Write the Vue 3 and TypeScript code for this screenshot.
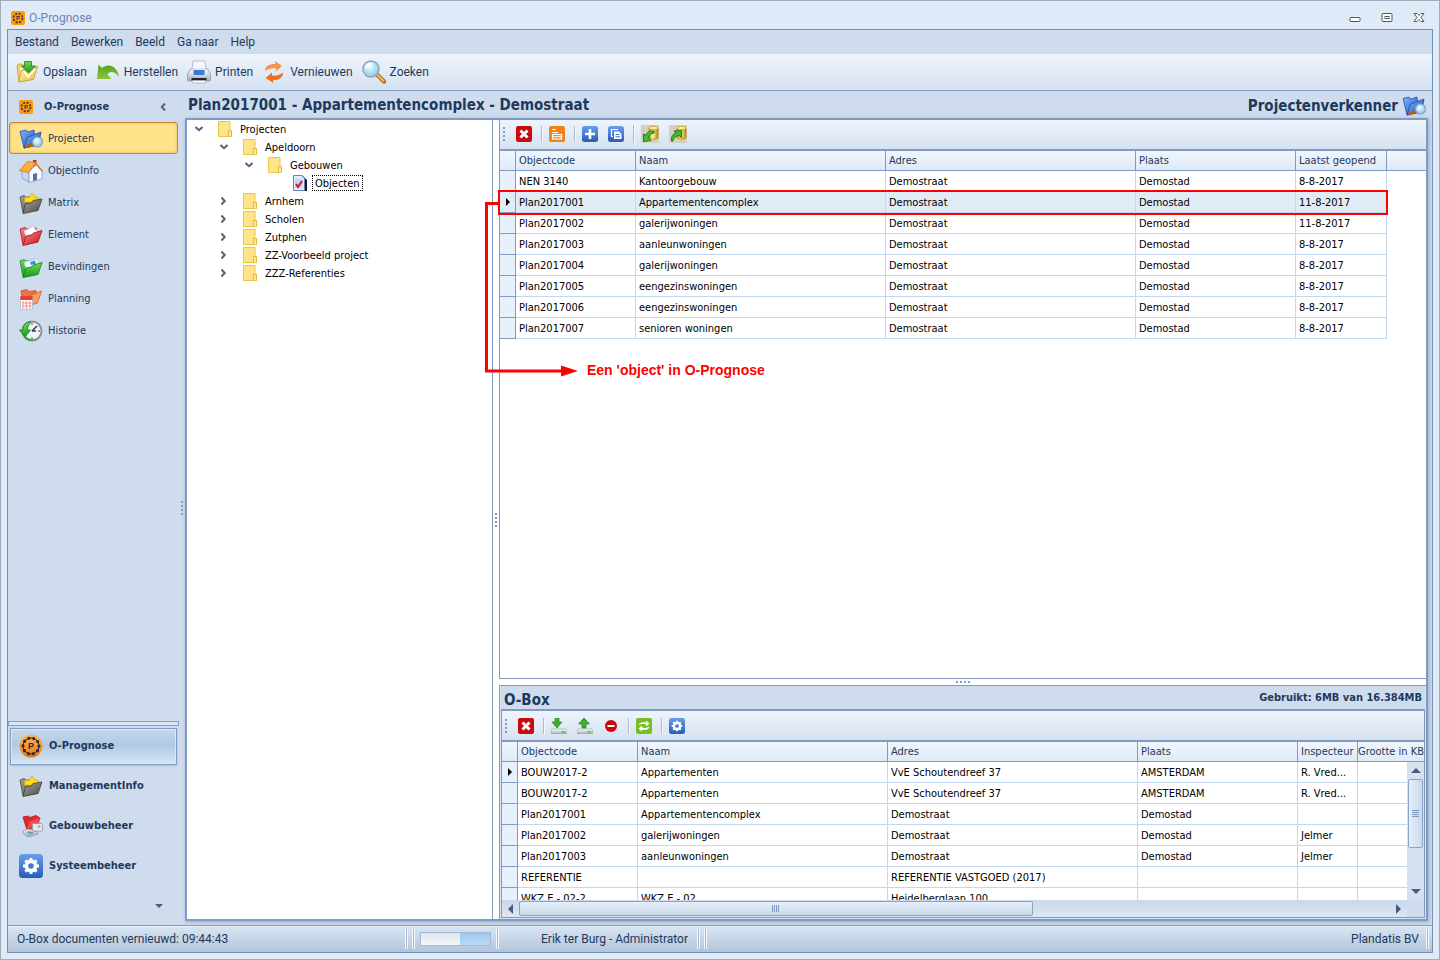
<script setup lang="ts">
import { ref } from 'vue'

interface NavItem { label: string; icon: string }
interface TreeNode { label: string; level: number; open?: boolean; leaf?: boolean }

const menu: string[] = ['Bestand', 'Bewerken', 'Beeld', 'Ga naar', 'Help']

const tools: NavItem[] = [
  { label: 'Opslaan', icon: 'save' },
  { label: 'Herstellen', icon: 'undo' },
  { label: 'Printen', icon: 'printer' },
  { label: 'Vernieuwen', icon: 'refresh' },
  { label: 'Zoeken', icon: 'search' },
]

const pages: NavItem[] = [
  { label: 'Projecten', icon: 'projects' },
  { label: 'ObjectInfo', icon: 'house' },
  { label: 'Matrix', icon: 'matrix' },
  { label: 'Element', icon: 'element' },
  { label: 'Bevindingen', icon: 'findings' },
  { label: 'Planning', icon: 'planning' },
  { label: 'Historie', icon: 'history' },
]
const activePage = ref('Projecten')

const modules: NavItem[] = [
  { label: 'O-Prognose', icon: 'round' },
  { label: 'ManagementInfo', icon: 'matrix' },
  { label: 'Gebouwbeheer', icon: 'building' },
  { label: 'Systeembeheer', icon: 'gear' },
]
const activeModule = ref('O-Prognose')

const tree: TreeNode[] = [
  { label: 'Projecten', level: 0, open: true },
  { label: 'Apeldoorn', level: 1, open: true },
  { label: 'Gebouwen', level: 2, open: true },
  { label: 'Objecten', level: 3, leaf: true },
  { label: 'Arnhem', level: 1 },
  { label: 'Scholen', level: 1 },
  { label: 'Zutphen', level: 1 },
  { label: 'ZZ-Voorbeeld project', level: 1 },
  { label: 'ZZZ-Referenties', level: 1 },
]

const objectTools: string[][] = [['delete'], ['form'], ['plus', 'copy'], ['dbin', 'dbout']]
const boxTools: string[][] = [['delete'], ['download', 'upload', 'stop'], ['sync'], ['gear']]
const toolNames: Record<string, string> = {
  delete: 'Sluiten', form: 'Formulier', plus: 'Toevoegen', copy: 'Kopiëren', dbin: 'Importeren',
  dbout: 'Exporteren', download: 'Downloaden', upload: 'Uploaden', stop: 'Verwijderen',
  sync: 'Synchroniseren', gear: 'Instellingen',
}

const objectColumns: string[] = ['Objectcode', 'Naam', 'Adres', 'Plaats', 'Laatst geopend']
const objects: string[][] = [
  ['NEN 3140', 'Kantoorgebouw', 'Demostraat', 'Demostad', '8-8-2017'],
  ['Plan2017001', 'Appartementencomplex', 'Demostraat', 'Demostad', '11-8-2017'],
  ['Plan2017002', 'galerijwoningen', 'Demostraat', 'Demostad', '11-8-2017'],
  ['Plan2017003', 'aanleunwoningen', 'Demostraat', 'Demostad', '8-8-2017'],
  ['Plan2017004', 'galerijwoningen', 'Demostraat', 'Demostad', '8-8-2017'],
  ['Plan2017005', 'eengezinswoningen', 'Demostraat', 'Demostad', '8-8-2017'],
  ['Plan2017006', 'eengezinswoningen', 'Demostraat', 'Demostad', '8-8-2017'],
  ['Plan2017007', 'senioren woningen', 'Demostraat', 'Demostad', '8-8-2017'],
]
const selectedObject = ref(1)

const boxColumns: string[] = ['Objectcode', 'Naam', 'Adres', 'Plaats', 'Inspecteur', 'Grootte in KB']
const boxRows: string[][] = [
  ['BOUW2017-2', 'Appartementen', 'VvE Schoutendreef 37', 'AMSTERDAM', 'R. Vred...', ''],
  ['BOUW2017-2', 'Appartementen', 'VvE Schoutendreef 37', 'AMSTERDAM', 'R. Vred...', ''],
  ['Plan2017001', 'Appartementencomplex', 'Demostraat', 'Demostad', '', ''],
  ['Plan2017002', 'galerijwoningen', 'Demostraat', 'Demostad', 'Jelmer', ''],
  ['Plan2017003', 'aanleunwoningen', 'Demostraat', 'Demostad', 'Jelmer', ''],
  ['REFERENTIE', '', 'REFERENTIE VASTGOED (2017)', '', '', ''],
  ['WKZ E - 02-2', 'WKZ E - 02', 'Heidelberglaan 100', '', '', ''],
]
const selectedBox = ref(0)
</script>

<template>
  <div class="window">
    <svg class="sprite" aria-hidden="true">
      <defs>
        <linearGradient id="gBlue" x1="0" y1="0" x2="0" y2="1"><stop offset="0" stop-color="#6a9ded" /><stop offset="1" stop-color="#2a5bb8" /></linearGradient>
        <linearGradient id="gFold" x1="0" y1="0" x2="1" y2="1"><stop offset="0" stop-color="#7fb2f6" /><stop offset="1" stop-color="#1d55c0" /></linearGradient>
        <linearGradient id="gYel" x1="0" y1="0" x2="1" y2="1"><stop offset="0" stop-color="#fff6bd" /><stop offset="1" stop-color="#efb93a" /></linearGradient>
        <linearGradient id="gGrey" x1="0" y1="0" x2="1" y2="1"><stop offset="0" stop-color="#a2a29c" /><stop offset="1" stop-color="#4c4a44" /></linearGradient>
        <linearGradient id="gRed" x1="0" y1="0" x2="1" y2="1"><stop offset="0" stop-color="#f98585" /><stop offset="1" stop-color="#c4141c" /></linearGradient>
        <linearGradient id="gGreen" x1="0" y1="0" x2="0" y2="1"><stop offset="0" stop-color="#6fdc4e" /><stop offset="1" stop-color="#159a22" /></linearGradient>
        <linearGradient id="gUndo" x1="0" y1="0" x2="0" y2="1"><stop offset="0" stop-color="#57a01d" /><stop offset="1" stop-color="#8cc63a" /></linearGradient>
        <linearGradient id="gOr" x1="0" y1="0" x2="0" y2="1"><stop offset="0" stop-color="#ffb65a" /><stop offset="1" stop-color="#ea780f" /></linearGradient>
        <linearGradient id="gSil" x1="0" y1="0" x2="0" y2="1"><stop offset="0" stop-color="#ffffff" /><stop offset="1" stop-color="#a3a8b2" /></linearGradient>
        <linearGradient id="gCyl" x1="0" y1="0" x2="1" y2="0"><stop offset="0" stop-color="#d8920c" /><stop offset=".4" stop-color="#fff29a" /><stop offset="1" stop-color="#c88606" /></linearGradient>
        <radialGradient id="gLens" cx=".4" cy=".35" r=".7"><stop offset="0" stop-color="#f4fdff" /><stop offset="1" stop-color="#7cc4ee" /></radialGradient>
      </defs>

      <symbol id="logo" viewBox="0 0 16 16">
        <rect x="1" y="1" width="14" height="14" rx="2" fill="#ff9a0a" />
        <circle cx="8" cy="8" r="4.5" fill="none" stroke="#4a4034" stroke-width="1.8" stroke-dasharray="2.2 1.334" />
      </symbol>
      <symbol id="round" viewBox="0 0 24 24">
        <circle cx="12" cy="12" r="11.5" fill="url(#gOr)" />
        <circle cx="12" cy="12" r="8" fill="none" stroke="#2b2b3a" stroke-width="1" />
        <circle cx="12" cy="12" r="8" fill="none" stroke="#2b2b3a" stroke-width="3.2" stroke-linecap="round" stroke-dasharray="0 5.03" />
      </symbol>
      <symbol id="save" viewBox="0 0 24 24">
        <path d="M2 6 L3.500 4 H7.500 L9 5.500 H17 V19 L4 22 Z" fill="#f3d068" stroke="#c79a2c" stroke-width=".8" />
        <path d="M5 8 L19 6 V15 L6 18Z" fill="#fffbe6" />
        <path d="M3.500 22 L6.500 10 L22.500 6.500 L18.500 19.500 Z" fill="url(#gYel)" stroke="#cda032" stroke-width=".9" />
        <path d="M9.500 12 L13 17 L20 9" fill="none" stroke="#fff" stroke-width="1.500" />
        <path d="M9.500 1.500 H16.500 V6 H20.500 L13.500 13 L6.500 6 H9.500Z" fill="url(#gGreen)" stroke="#187d1c" stroke-width=".8" />
      </symbol>
      <symbol id="undo" viewBox="0 0 24 24">
        <path d="M2.500 4.500 L1 19 L15.500 19 L11.500 14.500 C14 10.500 19 11.500 23 17 C22 7 12.500 2 6 8 Z" fill="url(#gUndo)" />
      </symbol>
      <symbol id="printer" viewBox="0 0 24 24">
        <path d="M6 1 H18 L19.500 13 H4.500Z" fill="#f6f8fc" stroke="#aab1c0" stroke-width=".8" />
        <path d="M3.500 9 H20.500 L23.500 14 V20 Q23.500 21 22.500 21 H1.500 Q.500 21 .500 20 V14Z" fill="url(#gSil)" stroke="#8d94a4" stroke-width=".8" />
        <path d="M6 8 H18 L18.500 15 H5.500Z" fill="#dfe8f8" />
        <rect x="6.500" y="10" width="11" height="5" fill="#3e78d2" />
        <path d="M4.500 18 H19.500 V20.500 H4.500Z" fill="#20242c" />
        <path d="M5 20.500 H19 L18 23 H6Z" fill="#fff" stroke="#9fa5b2" stroke-width=".7" />
      </symbol>
      <symbol id="refresh" viewBox="0 0 24 24">
        <path d="M3 11 C3 5.500 8 3.500 13.500 4 L13 1 L20 6 L14 11.500 L14 8.500 C9 8 6 9 3 11Z" fill="#f5934a" />
        <path d="M21 12.500 C21 18.500 16 20.500 11 20 L11.500 23 L3.500 18 L10 12.500 V15.500 C15 16 18 15 21 12.500Z" fill="#f26f21" />
      </symbol>
      <symbol id="search" viewBox="0 0 24 24">
        <path d="M15.500 15 L22 21.500" stroke="#a8651b" stroke-width="4.200" stroke-linecap="round" />
        <path d="M15.500 15 L21.500 21" stroke="#f4b54e" stroke-width="2.400" stroke-linecap="round" />
        <circle cx="9" cy="9" r="8" fill="url(#gLens)" stroke="#8ea3b8" stroke-width="1.400" />
        <path d="M4 8 C4.500 5 7 3.500 10 4" fill="none" stroke="#fff" stroke-width="1.600" />
      </symbol>

      <symbol id="projects" viewBox="0 0 24 24">
        <path d="M1 4.500 L7 3 L9 5 L15 3 L17 18 L5 21Z" fill="url(#gFold)" stroke="#2550ad" stroke-width=".8" />
        <path d="M5 21 L8.500 10 L13 8.500 L22 5 L19.500 18Z" fill="url(#gFold)" stroke="#2048a0" stroke-width=".8" />
        <path d="M8 19.500 L14 17.500" stroke="#b95c16" stroke-width="3.200" stroke-linecap="round" />
        <circle cx="18.500" cy="15" r="5" fill="url(#gLens)" stroke="#7ea4c6" stroke-width="1.200" />
      </symbol>
      <symbol id="house" viewBox="0 0 24 24">
        <rect x="14" y="1" width="3.500" height="7" fill="#c8331f" />
        <path d="M3 11 L10 14 V23 L3 19Z" fill="#c9d8f0" stroke="#7f9cce" stroke-width=".8" />
        <path d="M10 13 L17 5.500 L23 12 V20 L10 23.500Z" fill="#f7faff" stroke="#7f9cce" stroke-width=".8" />
        <path d="M.500 11.500 L8.500 2.500 L17 3.500 L9.500 13.500Z" fill="#ffad42" stroke="#d9731c" stroke-width=".8" />
        <path d="M16.500 4 L23.500 12.500" stroke="#e98124" stroke-width="1.600" />
        <path d="M14 15 L18 14 V21 L14 22Z" fill="#5a6fa8" />
      </symbol>
      <symbol id="matrix" viewBox="0 0 24 24">
        <path d="M1 6 L5 4.500 L7 6 L16 6 L18 19 L4 22Z" fill="url(#gGrey)" stroke="#4d4b45" stroke-width=".8" />
        <path d="M5 11 L6 6 L10 6.500 L13 2 L15.500 5.500 L20 7 L17 12Z" fill="#ffdc16" stroke="#d7a208" stroke-width=".7" />
        <path d="M4 22.500 L6.500 12.500 L12 12 L14 9.500 L23 8 L19 19.500Z" fill="url(#gGrey)" stroke="#403e39" stroke-width=".8" />
      </symbol>
      <symbol id="element" viewBox="0 0 24 24">
        <path d="M1 6 L6 4.500 L8 6 L17 5 L18 19 L4 22Z" fill="url(#gRed)" stroke="#b01820" stroke-width=".8" />
        <path d="M5 8 L14 3.500 L19 9 L7 14Z" fill="#fff" stroke="#c9c9d2" stroke-width=".7" />
        <path d="M4 22.500 L7 13 L12.500 12 L14.500 10 L23 7.500 L19 19Z" fill="url(#gRed)" stroke="#a8121a" stroke-width=".8" />
      </symbol>
      <symbol id="findings" viewBox="0 0 24 24">
        <path d="M1 6 L5 4.500 L7 6 L17 5 L18 19 L4 22Z" fill="url(#gGreen)" stroke="#168a1e" stroke-width=".8" />
        <path d="M5 7 L18 3.500 L20 9 L7 14Z" fill="#eef8ff" stroke="#9cc6dc" stroke-width=".7" />
        <path d="M11 7 L16 5.500 L17 9 L12 10Z" fill="#3f8fd8" />
        <path d="M4 22.500 L7 13 L12.500 12 L14.500 10 L23 7.500 L19 19.500Z" fill="url(#gGreen)" stroke="#128019" stroke-width=".8" />
      </symbol>
      <symbol id="planning" viewBox="0 0 24 24">
        <path d="M2 4 L8 2.500 L10 4.500 L17 3.500 V16 L5 19Z" fill="#f0743a" stroke="#c24d18" stroke-width=".8" />
        <path d="M8 19 L11 8.500 L15 7 L22.500 4 L18.500 16Z" fill="#fb9a5c" stroke="#cf5e22" stroke-width=".8" />
        <rect x="1.500" y="10" width="12" height="12" fill="#fff" stroke="#b9b3b9" stroke-width=".8" />
        <rect x="1.500" y="9" width="12" height="4" fill="#e0402f" />
        <path d="M4 14 V21 M7.500 14 V21 M11 14 V21 M3 16 H12.500 M3 19 H12.500" stroke="#ef8f85" stroke-width="1" />
      </symbol>
      <symbol id="history" viewBox="0 0 24 24">
        <circle cx="13" cy="12" r="10.500" fill="#8a929c" />
        <circle cx="13" cy="12" r="8.500" fill="#eef6fb" />
        <path d="M13 12 L18 7 M13 12 H17" stroke="#24456e" stroke-width="1.600" />
        <path d="M13 4 V6 M13 18 V20 M19 12 H21" stroke="#e2483c" stroke-width="1.300" />
        <path d="M12 3 C6 3 3.500 7 3.500 11 H.500 L6 18 L11.500 11 H8.500 C8.500 8 9.500 6 12 3Z" fill="url(#gGreen)" stroke="#0f7d19" stroke-width=".8" />
        <path d="M7 17 C9 20 13 21 17 20 C14 23 8 22.500 5 18Z" fill="#2da833" />
      </symbol>
      <symbol id="building" viewBox="0 0 24 24">
        <path d="M4 3 L9 2 L11 3.500 L17 1.500 L21 4 L18 13 L8 16Z" fill="#e12a2f" stroke="#ad151c" stroke-width=".8" />
        <path d="M8 15 L10.500 7.500 L21 3.500 L18 12Z" fill="#f14b4b" />
        <path d="M4 17 L9 15 L19 18.500 V20 L11 22.500 H8 L4 19Z" fill="url(#gSil)" stroke="#8f969f" stroke-width=".8" />
        <path d="M7 18 L10 17 L16 19 L11 20.500Z" fill="#5aa6dd" />
        <rect x="13.500" y="9.500" width="10" height="7.500" rx="1" fill="#e6eaee" stroke="#8f969f" stroke-width=".8" />
        <circle cx="20" cy="12.500" r="1.600" fill="#aeb5bc" />
      </symbol>
      <symbol id="gear" viewBox="0 0 24 24">
        <rect width="24" height="24" rx="3.500" fill="url(#gBlue)" />
        <circle cx="12" cy="12" r="4.600" fill="none" stroke="#fff" stroke-width="3.600" />
        <path d="M12 4V20M4 12H20M6.400 6.400L17.600 17.600M17.600 6.400L6.400 17.600" stroke="#fff" stroke-width="3" />
        <circle cx="12" cy="12" r="2.800" fill="#447ad2" />
      </symbol>

      <symbol id="delete" viewBox="0 0 16 16">
        <rect width="16" height="16" rx="2" fill="#c90a0e" />
        <path d="M4.500 4.500 L11.500 11.500 M11.500 4.500 L4.500 11.500" stroke="#fff" stroke-width="3" />
      </symbol>
      <symbol id="form" viewBox="0 0 16 16">
        <rect width="16" height="16" rx="2" fill="#f08316" />
        <path d="M3 3.500 H7 M3 6.500 H9" stroke="#fff" stroke-width="1.200" />
        <rect x="3.500" y="8.500" width="9" height="4.500" fill="none" stroke="#fff" stroke-width="1.200" />
        <path d="M3 10.700 H13" stroke="#fff" stroke-width="1" />
      </symbol>
      <symbol id="plus" viewBox="0 0 16 16">
        <rect width="16" height="16" rx="2.500" fill="url(#gBlue)" />
        <path d="M8 3 V13 M3 8 H13" stroke="#fff" stroke-width="2.600" />
      </symbol>
      <symbol id="copy" viewBox="0 0 16 16">
        <rect width="16" height="16" rx="2.500" fill="url(#gBlue)" />
        <path d="M10 3.500 H3.500 V10.500 H5" fill="none" stroke="#fff" stroke-width="1.200" />
        <path d="M6 5.500 H11 L13.500 8 V13 H6Z" fill="#fff" />
        <path d="M7.500 8.500 H11.500 M7.500 10.800 H12" stroke="#3d70c8" stroke-width="1" />
      </symbol>
      <symbol id="dbin" viewBox="0 0 18 18">
        <rect width="18" height="18" fill="#d2cfc5" />
        <path d="M8 3 V13 Q12.500 16 17 13 V3Z" fill="url(#gCyl)" stroke="#b78308" stroke-width=".7" />
        <ellipse cx="12.500" cy="3" rx="4.500" ry="1.800" fill="#ffeb8a" stroke="#c2940e" stroke-width=".7" />
        <path d="M13 6 C8.500 5.500 5.500 7.500 5 10.500 L2.500 9 V16.500 L10 15.500 L7.500 13 C8 10 10 8.500 13 8Z" fill="#46bd2b" stroke="#17701a" stroke-width=".9" />
      </symbol>
      <symbol id="dbout" viewBox="0 0 18 18">
        <rect width="18" height="18" fill="#d2cfc5" />
        <path d="M8 3 V13 Q12.500 16 17 13 V3Z" fill="url(#gCyl)" stroke="#b78308" stroke-width=".7" />
        <ellipse cx="12.500" cy="3" rx="4.500" ry="1.800" fill="#ffeb8a" stroke="#c2940e" stroke-width=".7" />
        <path d="M2.500 16 C2 11.500 4 9 7 8 L5 6 L12.500 5.500 V13 L10 10.500 C7 11 4.500 12.500 4 16Z" fill="#46bd2b" stroke="#17701a" stroke-width=".9" />
      </symbol>
      <symbol id="download" viewBox="0 0 16 16">
        <path d="M1 11 H15 L16 13 V16 H0 V13Z" fill="url(#gSil)" stroke="#9a9f98" stroke-width=".6" />
        <rect x="10.500" y="13.200" width="3.500" height="1.300" fill="#46bd2b" />
        <path d="M4 0 H8 V4 H11 L6 10 L1 4 H4Z" fill="#3fae30" stroke="#2a8420" stroke-width=".7" />
      </symbol>
      <symbol id="upload" viewBox="0 0 16 16">
        <path d="M1 11 H15 L16 13 V16 H0 V13Z" fill="url(#gSil)" stroke="#9a9f98" stroke-width=".6" />
        <rect x="10.500" y="13.200" width="3.500" height="1.300" fill="#46bd2b" />
        <path d="M5 10 H9 V6 H12.500 L7 0 L1.500 6 H5Z" fill="#3fae30" stroke="#2a8420" stroke-width=".7" />
      </symbol>
      <symbol id="stop" viewBox="0 0 16 16">
        <circle cx="8" cy="8" r="6" fill="#cf0408" />
        <rect x="4.500" y="7" width="7" height="2" fill="#fff" />
      </symbol>
      <symbol id="sync" viewBox="0 0 16 16">
        <rect width="16" height="16" rx="2" fill="#78bd25" />
        <path d="M2.500 7.500 C3 4.500 6.500 3.500 10 4.500 V2.500 L13.500 5.500 L10 8.500 V6.500 C7 5.800 4.500 6 2.500 7.500Z" fill="#fff" />
        <path d="M13.500 8.500 C13 11.500 9.500 12.500 6 11.500 V13.500 L2.500 10.500 L6 7.500 V9.500 C9 10.200 11.500 10 13.500 8.500Z" fill="#fff" />
      </symbol>
      <symbol id="folder" viewBox="0 0 14 16">
        <path d="M.500 .500 H12 V9.500 H13.500 V15.500 H.500Z" fill="#ffe38a" stroke="#ecc648" />
        <path d="M10.500 15 V9.500 H13.500 V15.500" fill="#ffe999" stroke="#e0b83a" />
      </symbol>
      <symbol id="doc" viewBox="0 0 14 16">
        <path d="M9 0 L14 5 V16 H10 V2Z" fill="#14142a" />
        <path d="M.500 .500 H9 L11.500 3.500 V15.500 H.500Z" fill="#dcecfc" stroke="#6884ac" />
        <rect x="2" y="4" width="8" height="9" fill="#b9d9f6" />
        <path d="M3 9 L5 12 L9 6" fill="none" stroke="#e3101c" stroke-width="2" />
      </symbol>
      <symbol id="chev" viewBox="0 0 8 8">
        <path d="M.500 2 L4 5.200 L7.500 2" fill="none" stroke="#56627f" stroke-width="2" />
      </symbol>
    </svg>

    <header class="titlebar">
      <svg class="i16" viewBox="0 0 16 16"><use href="#logo" /><text class="letter" x="8" y="10">P</text></svg>
      <span class="app-name">O-Prognose</span>
      <div class="win-buttons">
        <button aria-label="Minimaliseren"><svg width="12" height="12" viewBox="0 0 12 12"><rect x="1" y="5.500" width="10" height="4" rx="1" fill="#fff" stroke="#4d5664" /></svg></button>
        <button aria-label="Maximaliseren"><svg width="12" height="12" viewBox="0 0 12 12"><rect x="1" y="1.500" width="10" height="8" rx="1" fill="#fff" stroke="#4d5664" /><rect x="4" y="4.500" width="4" height="2" fill="#fff" stroke="#4d5664" /></svg></button>
        <button aria-label="Sluiten"><svg width="12" height="12" viewBox="0 0 12 12"><path d="M1 1.500 H4 L6 3.500 L8 1.500 H11 L8 5.500 L11 9.500 H8 L6 7.500 L4 9.500 H1 L4 5.500Z" fill="#fff" stroke="#4d5664" /></svg></button>
      </div>
    </header>

    <div class="frame">
      <nav class="menubar">
        <button v-for="m in menu" :key="m">{{ m }}</button>
      </nav>
      <div class="toolbar">
        <button v-for="t in tools" :key="t.label">
          <svg class="i24"><use :href="'#' + t.icon" /></svg>{{ t.label }}
        </button>
      </div>

      <div class="main">
        <aside class="nav">
          <div class="nav-head">
            <svg class="i16" viewBox="0 0 16 16"><use href="#logo" /><text class="letter" x="8" y="10">P</text></svg>
            <strong>O-Prognose</strong>
            <button class="fold" aria-label="Inklappen"><svg class="chev left"><use href="#chev" /></svg></button>
          </div>
          <button
            v-for="p in pages" :key="p.label" class="page" :class="{ active: p.label === activePage }"
            @click="activePage = p.label"
          >
            <svg class="i24"><use :href="'#' + p.icon" /></svg>{{ p.label }}
          </button>
          <div class="nav-split"></div>
          <div class="modules">
            <button
              v-for="m in modules" :key="m.label" class="module" :class="{ active: m.label === activeModule }"
              @click="activeModule = m.label"
            >
              <svg class="i24" viewBox="0 0 24 24">
                <use :href="'#' + m.icon" />
                <text v-if="m.icon === 'round'" class="letter big" x="12" y="15">P</text>
              </svg>{{ m.label }}
            </button>
          </div>
          <button class="more" aria-label="Meer"><i class="tri down small"></i></button>
        </aside>
        <div class="vsplit"><i v-for="n in 4" :key="n"></i></div>

        <section class="content">
          <div class="heading">
            <h1>Plan2017001 - Appartementencomplex - Demostraat</h1>
            <h2>Projectenverkenner<svg class="i24"><use href="#projects" /></svg></h2>
          </div>
          <div class="workspace">
            <ul class="tree">
              <li v-for="n in tree" :key="n.label" :style="{ paddingLeft: n.level * 25 + 6 + 'px' }">
                <button v-if="!n.leaf" class="toggle" :aria-label="n.label"><svg class="chev" :class="{ right: !n.open }"><use href="#chev" /></svg></button>
                <span v-else class="toggle"></span>
                <svg class="node"><use :href="n.leaf ? '#doc' : '#folder'" /></svg>
                <span class="label" :class="{ focused: n.leaf }">{{ n.label }}</span>
              </li>
            </ul>
            <div class="vsplit white"><i v-for="n in 4" :key="n"></i></div>

            <div class="right">
              <div class="objects">
                <div class="strip">
                  <span class="grip"></span>
                  <div v-for="(g, gi) in objectTools" :key="gi" class="group">
                    <button v-for="t in g" :key="t" :aria-label="toolNames[t]"><svg :class="t.startsWith('db') ? 'i18' : 'i16'"><use :href="'#' + t" /></svg></button>
                  </div>
                </div>
                <table class="grid">
                  <colgroup><col class="c-ind" /><col class="c-code" /><col class="c-wide" /><col class="c-wide" /><col class="c-city" /><col class="c-date" /><col /></colgroup>
                  <thead><tr><th></th><th v-for="c in objectColumns" :key="c">{{ c }}</th><th></th></tr></thead>
                  <tbody>
                    <tr v-for="(r, ri) in objects" :key="ri" :class="{ sel: ri === selectedObject }" @click="selectedObject = ri">
                      <td class="ind"><i v-if="ri === selectedObject" class="tri mark"></i></td>
                      <td v-for="(c, ci) in r" :key="ci">{{ c }}</td>
                      <td class="void"></td>
                    </tr>
                  </tbody>
                </table>
                <div class="callout">
                  <div class="ring"></div>
                  <svg width="96" height="180" viewBox="0 0 96 180">
                    <path d="M15 3.500 H2.500 V171 H80" fill="none" stroke="#f00" stroke-width="3" />
                    <path d="M77 165.500 L94 171 L77 176.500Z" fill="#f00" />
                  </svg>
                  <p>Een 'object' in O-Prognose</p>
                </div>
              </div>
              <div class="hsplit"><i v-for="n in 4" :key="n"></i></div>
              <div class="box">
                <div class="box-head"><h2>O-Box</h2><strong>Gebruikt: 6MB van 16.384MB</strong></div>
                <div class="box-body">
                  <div class="strip">
                    <span class="grip"></span>
                    <div v-for="(g, gi) in boxTools" :key="gi" class="group">
                      <button v-for="t in g" :key="t" :aria-label="toolNames[t]"><svg class="i16"><use :href="'#' + t" /></svg></button>
                    </div>
                  </div>
                  <div class="clip">
                    <table class="grid">
                      <colgroup><col class="c-ind" /><col class="c-code" /><col class="c-wide" /><col class="c-wide" /><col class="c-city" /><col class="c-insp" /><col /></colgroup>
                      <thead><tr><th></th><th v-for="c in boxColumns" :key="c">{{ c }}</th></tr></thead>
                      <tbody>
                        <tr v-for="(r, ri) in boxRows" :key="ri" @click="selectedBox = ri">
                          <td class="ind"><i v-if="ri === selectedBox" class="tri mark"></i></td>
                          <td v-for="(c, ci) in r" :key="ci">{{ c }}</td>
                        </tr>
                      </tbody>
                    </table>
                    <div class="vscroll">
                      <button aria-label="Omhoog"><i class="tri up"></i></button>
                      <div class="thumb"></div>
                      <button class="last" aria-label="Omlaag"><i class="tri down"></i></button>
                    </div>
                  </div>
                  <div class="hscroll">
                    <button aria-label="Links"><i class="tri leftward"></i></button>
                    <div class="track"><div class="thumb"></div></div>
                    <button aria-label="Rechts"><i class="tri rightward"></i></button>
                    <span class="corner"></span>
                  </div>
                </div>
              </div>
            </div>
          </div>
        </section>
      </div>

      <footer class="status">
        <span class="msg">O-Box documenten vernieuwd: 09:44:43</span>
        <i class="sep"></i><i class="sep"></i>
        <div class="progress" role="progressbar" aria-label="Voortgang"><div></div></div>
        <i class="sep"></i>
        <span class="user">Erik ter Burg - Administrator</span>
        <i class="sep"></i><i class="sep"></i>
        <span class="company">Plandatis BV</span>
        <i class="sep"></i>
      </footer>
    </div>
  </div>
</template>

<style>
html, body { margin: 0; }
</style>

<style scoped>
* { box-sizing: border-box; }
button { border: 0; background: none; padding: 0; margin: 0; font: inherit; color: inherit; cursor: default; text-align: left; }
h1, h2, p, ul { margin: 0; padding: 0; }
svg { display: block; flex: none; }
.sprite { position: absolute; width: 0; height: 0; }
.i16 { width: 16px; height: 16px; }
.i18 { width: 18px; height: 18px; }
.i24 { width: 24px; height: 24px; }
.letter { font: 700 6px "Liberation Sans", Arial, sans-serif; text-anchor: middle; fill: #2b2b3a; }
.letter.big { font-size: 9px; }

.window {
  display: flex; flex-direction: column; height: 100vh; padding: 0 6px 6px; overflow: hidden;
  border: 1px solid #9dacbc; background: #dfeaf6; color: #1e395b;
  font: 11px/14px "DejaVu Sans Condensed", Tahoma, sans-serif;
}
.titlebar { display: flex; align-items: center; gap: 3px; height: 28px; flex: none; padding: 5px 8px 0 3px; }
.app-name { color: #6d83b4; font: 12px/16px Roboto, "Segoe UI", sans-serif; }
.win-buttons { display: flex; gap: 20px; margin-left: auto; }

.frame { flex: 1; min-height: 0; display: flex; flex-direction: column; border: 1px solid #7390b4; background: #cfdcee; }
.menubar { display: flex; gap: 12px; height: 24px; flex: none; padding: 0 7px; font: 12px/24px Roboto, "Segoe UI", sans-serif; }
.toolbar {
  display: flex; align-items: center; gap: 9px; height: 37px; flex: none; padding: 0 7px; border-bottom: 1px solid #859ebf;
  background: linear-gradient(#edf4fd, #d6e2f0); font: 12px/16px Roboto, "Segoe UI", sans-serif;
}
.toolbar button { display: flex; align-items: center; gap: 4px; }

.main { flex: 1; min-height: 0; display: flex; }
.nav { width: 171px; flex: none; display: flex; flex-direction: column; }
.nav-head { display: flex; align-items: center; gap: 10px; height: 31px; flex: none; padding: 0 12px 0 10px; }
.nav-head strong { flex: 1; }
.chev { width: 8px; height: 8px; }
.chev.left { transform: rotate(90deg); }
.chev.right { transform: rotate(-90deg); }
.page { display: flex; align-items: center; gap: 5px; height: 32px; margin: 0 1px; padding: 2px 0 0 9px; border: 1px solid transparent; border-radius: 3px; }
.page.active { border-color: #c08a3c; background: #ffe28a; box-shadow: inset 0 0 3px #e5a94a; }
.nav-split { height: 5px; margin-top: auto; border: 1px solid #86a0c4; background: #d9e7f6; }
.modules { display: flex; flex-direction: column; gap: 3px; padding: 2px; }
.module { display: flex; align-items: center; gap: 6px; height: 37px; padding: 0 0 1px 8px; border: 1px solid transparent; font-weight: 700; }
.module.active { border-color: #7f9cc4; background: linear-gradient(#c6d8ec, #b1c9e3 45%, #d3e4f4); box-shadow: inset 0 0 0 1px #dbe8f6, 0 1px 2px #a9bdd6; }
.more { align-self: flex-end; height: 38px; width: 40px; display: flex; align-items: center; justify-content: center; }

.vsplit { width: 6px; flex: none; display: flex; flex-direction: column; justify-content: center; gap: 2px; padding-left: 2px; }
.vsplit i, .hsplit i { width: 2px; height: 2px; background: #8a9dbb; }
.white { background: #fff; }

.content { flex: 1; min-width: 0; display: flex; flex-direction: column; padding: 0 4px 4px 0; }
.heading { display: flex; align-items: center; justify-content: space-between; height: 27px; flex: none; padding: 0 2px 0 3px; }
h1, h2 { font-size: 15px; line-height: 20px; font-weight: 700; }
.heading h2 { display: flex; align-items: center; gap: 4px; padding-top: 2px; }
.workspace { flex: 1; min-height: 0; display: flex; border: 2px solid #819bbf; box-shadow: 1px 1px 4px #94a9c7; background: #fff; }
.tree { width: 306px; flex: none; list-style: none; border-right: 1px solid #819bbf; color: #000; }
.tree li { display: flex; align-items: center; height: 18px; }
.toggle { width: 11px; height: 18px; display: flex; align-items: center; justify-content: center; }
.node { width: 14px; height: 16px; margin: 0 5px 0 14px; }
.label { padding: 1px 2px 0; border: 1px solid transparent; }
.label.focused { border: 1px dotted #000; line-height: 13px; }

.right { flex: 1; min-width: 0; display: flex; flex-direction: column; }
.objects { position: relative; flex: 1; min-height: 0; border-left: 1px solid #819bbf; border-bottom: 1px solid #819bbf; }
.strip { display: flex; align-items: center; height: 31px; flex: none; border-bottom: 2px solid #819bbf; background: linear-gradient(#edf4fd, #d6e2f0); }
.objects .strip { padding-bottom: 1px; }
.grip { width: 2px; height: 14px; margin: 0 4px 0 3px; background: repeating-linear-gradient(#8a9dbb 0 2px, transparent 2px 4px); }
.group { display: flex; gap: 10px; padding: 0 9px 0 7px; }
.group + .group { border-left: 1px solid #a9bbd3; box-shadow: inset 1px 0 #f5f9fe; }

.grid { width: 100%; table-layout: fixed; border-collapse: separate; border-spacing: 0; color: #000; }
.c-ind { width: 16px; }
.c-code { width: 120px; }
.c-wide { width: 250px; }
.c-city { width: 160px; }
.c-date { width: 91px; }
.c-insp { width: 60px; }
th, td { overflow: hidden; white-space: nowrap; text-overflow: ellipsis; padding: 1px 3px 0; text-align: left; font-weight: 400; }
th {
  height: 20px; padding-top: 0; color: #1e395b; border-right: 1px solid #819bbf; border-bottom: 1px solid #819bbf;
  background: linear-gradient(#f0f6fe, #dfeaf7); text-overflow: clip;
}
th:last-child { border-right: 0; padding: 0; }
td { height: 21px; border-right: 1px solid #c3d7f1; border-bottom: 1px solid #c3d7f1; }
td.ind { padding: 0; border-color: #819bbf; background: #e7f0fb; }
td.void { border: 0; background: #fff; }
tr.sel td:not(.void) { background: #e1ebf6; }

.tri { display: block; width: 0; height: 0; border: 0 solid transparent; }
.tri.mark { margin-left: 6px; border-width: 4px 0 4px 4px; border-left-color: #000; }
.tri.up { border-width: 0 5px 5px; border-bottom-color: #4a5a80; }
.tri.down { border-width: 5px 5px 0; border-top-color: #4a5a80; }
.tri.down.small { border-width: 4px 4px 0; }
.tri.leftward { border-width: 5px 5px 5px 0; border-right-color: #4a5a80; }
.tri.rightward { border-width: 5px 0 5px 5px; border-left-color: #4a5a80; }

.callout { position: absolute; left: -16px; top: 70px; pointer-events: none; }
.callout .ring { position: absolute; left: 14px; top: 0; width: 890px; height: 25px; border: 2px solid #f00; }
.callout svg { position: absolute; left: 0; top: 10px; }
.callout p { position: absolute; left: 103px; top: 172px; color: #f00; white-space: nowrap; font: 700 14px/16px "Liberation Sans", Arial, sans-serif; }

.hsplit { height: 6px; flex: none; display: flex; align-items: center; justify-content: center; gap: 2px; }
.box { height: 234px; flex: none; display: flex; flex-direction: column; padding: 0 1px 1px; border: 1px solid #819bbf; border-width: 1px 0 0 1px; background: #dbe6f3; }
.box-head { display: flex; align-items: center; justify-content: space-between; height: 23px; flex: none; padding: 0 3px; background: #cfdcee; }
.box-head h2 { padding-top: 4px; }
.box-body { flex: 1; min-height: 0; display: flex; flex-direction: column; border: 1px solid #819bbf; border-top-width: 2px; }
.clip { position: relative; flex: 1; min-height: 0; overflow: hidden; background: #fff; }
.vscroll { position: absolute; right: 0; top: 20px; bottom: 0; width: 17px; display: flex; flex-direction: column; background: #d5e1f0; }
.vscroll button { height: 17px; display: flex; align-items: center; justify-content: center; }
.vscroll .last { margin-top: auto; }
.thumb { border: 1px solid #8aa5c9; border-radius: 2px; }
.vscroll .thumb {
  height: 69px; margin: 0 1px;
  background: repeating-linear-gradient(#8199bf 0 1px, transparent 1px 2px) center / 7px 7px no-repeat, linear-gradient(90deg, #e6eff9, #c9d9ec);
}
.hscroll { display: flex; height: 17px; flex: none; background: linear-gradient(#c9d7e9, #dde8f4); }
.hscroll button { width: 17px; display: flex; align-items: center; justify-content: center; }
.track { flex: 1; display: flex; padding: 1px 0; }
.track .thumb {
  width: 59%;
  background: repeating-linear-gradient(90deg, #8199bf 0 1px, transparent 1px 2px) center / 7px 7px no-repeat, linear-gradient(#e6eff9, #c9d9ec);
}
.corner { width: 17px; background: #cfdcee; }

.status {
  display: flex; align-items: center; height: 27px; flex: none; border-top: 1px solid #7f9abf; box-shadow: inset 0 1px #eaf2fb;
  background: linear-gradient(#d9e5f3, #b3c5db); font: 12px/16px Roboto, "Segoe UI", sans-serif;
}
.msg { width: 397px; padding-left: 9px; }
.sep { width: 3px; height: 20px; margin-right: 4px; border: 1px solid #f2f7fc; border-width: 0 1px; background: #a3b7d1; }
.progress { width: 71px; height: 14px; margin: 0 5px 0 1px; border: 1px solid #a5b7d2; background: linear-gradient(#dde5ee, #f4f7fa); }
.progress div { width: 44%; height: 100%; margin-left: auto; background: linear-gradient(#9cc8f0, #b9dbf7); }
.user { width: 194px; padding-left: 38px; white-space: nowrap; }
.company { margin-left: auto; padding-right: 7px; }
.status .sep:last-child { margin-right: 3px; }
</style>
